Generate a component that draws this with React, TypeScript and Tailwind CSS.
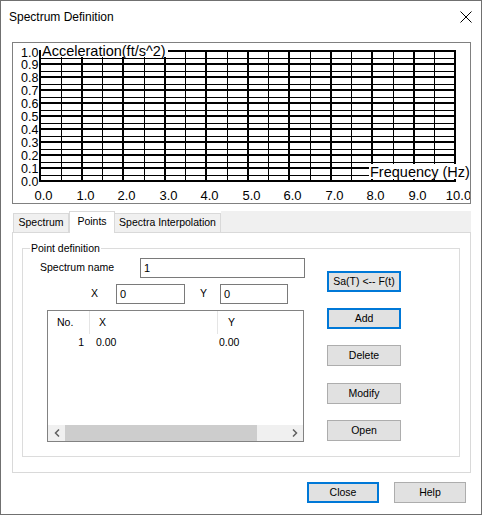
import React from "react";

const ui = { fontFamily: '"Liberation Sans", Arial, sans-serif' };

// plot geometry, in chart-svg coordinates (svg origin = page 13,43)
const X0 = 27;
const XSTEP = 41.5;
const Y0 = 8;
const YSTEP = 13;

function Chart() {
  const majorX = Array.from({ length: 11 }, (_, i) => Math.round(X0 + i * XSTEP));
  const minorX = Array.from({ length: 10 }, (_, i) => Math.round(X0 + (i + 0.5) * XSTEP) + 0.5);
  const majorY = Array.from({ length: 11 }, (_, j) => Math.round(Y0 + j * YSTEP));
  const minorY = Array.from({ length: 10 }, (_, j) => Math.round(Y0 + (j + 0.5) * YSTEP) + 0.5);
  const left = majorX[0];
  const right = majorX[10];
  const top = majorY[0];
  const bottom = majorY[10];

  return (
    <svg width={457} height={160} className="block" style={{ fontFamily: '"Liberation Sans", Arial, sans-serif' }}>
      {minorX.map((x) => (
        <line key={"mx" + x} x1={x} x2={x} y1={top} y2={bottom} stroke="#000" strokeWidth={1} />
      ))}
      {minorY.map((y) => (
        <line key={"my" + y} x1={left} x2={right} y1={y} y2={y} stroke="#000" strokeWidth={1} />
      ))}
      {majorX.map((x) => (
        <line key={"Mx" + x} x1={x} x2={x} y1={top - 1} y2={bottom + 1} stroke="#000" strokeWidth={2} />
      ))}
      {majorY.map((y) => (
        <line key={"My" + y} x1={left} x2={right} y1={y} y2={y} stroke="#000" strokeWidth={2} />
      ))}

      {/* axis titles sit on white boxes over the grid */}
      <rect x={28} y={1} width={127} height={13} fill="#fff" />
      <text x={29} y={12.5} fontSize={14.5} fill="#000">
        Acceleration(ft/s^2)
      </text>
      <rect x={356} y={121} width={100} height={15} fill="#fff" />
      <text x={357} y={134} fontSize={14.5} fill="#000">
        Frequency (Hz)
      </text>

      {["1.0", "0.9", "0.8", "0.7", "0.6", "0.5", "0.4", "0.3", "0.2", "0.1", "0.0"].map((t, j) => (
        <text
          key={t}
          x={25.5}
          y={majorY[j] + (j === 0 ? 6 : 5)}
          fontSize={12.5}
          textAnchor="end"
          fill="#000"
        >
          {t}
        </text>
      ))}
      {["0.0", "1.0", "2.0", "3.0", "4.0", "5.0", "6.0", "7.0", "8.0", "9.0", "10.0"].map((t, i) => (
        <text key={t} x={majorX[i] + 3.5} y={156.5} fontSize={13} textAnchor="middle" fill="#000">
          {t}
        </text>
      ))}
    </svg>
  );
}

function Button({ label, focused, className = "" }: { label: string; focused?: boolean; className?: string }) {
  return (
    <button
      className={`h-[21px] bg-[#e1e1e1] text-[10.5px] text-black leading-none flex items-center justify-center ${
        focused ? "border-2 border-[#0078d7]" : "border border-[#adadad]"
      } ${className}`}
      style={ui}
    >
      {label}
    </button>
  );
}

function TextBox({ value, className = "" }: { value: string; className?: string }) {
  return (
    <div className={`h-[20px] border border-[#7a7a7a] bg-white flex items-center pl-[3px] text-[11px] ${className}`}>
      {value}
    </div>
  );
}

function ListView() {
  return (
    <div className="ml-[24px] mt-[6px] w-[257px] h-[132px] border border-[#828282] bg-white flex flex-col text-[10.5px]">
      <div className="flex h-[24px] items-center">
        <div className="w-[41px] pl-[9px]">No.</div>
        <div className="w-[1px] h-[23px] self-start bg-[#e5e5e5]" />
        <div className="w-[127px] pl-[9px]">X</div>
        <div className="w-[1px] h-[23px] self-start bg-[#e5e5e5]" />
        <div className="flex-1 pl-[10px]">Y</div>
      </div>
      <div className="flex h-[16px] items-center">
        <div className="w-[36px] text-right">1</div>
        <div className="w-[129px] pl-[12px]">0.00</div>
        <div className="flex-1 pl-[6px]">0.00</div>
      </div>
      <div className="flex-1" />
      <div className="flex h-[16px] bg-[#f0f0f0]">
        <div className="w-[17px] flex items-center justify-center">
          <svg width="6" height="8" viewBox="0 0 6 8">
            <path d="M5 0.5 L1.5 4 L5 7.5" fill="none" stroke="#606060" strokeWidth="1.5" />
          </svg>
        </div>
        <div className="w-[192px] bg-[#cdcdcd]" />
        <div className="flex-1" />
        <div className="w-[17px] flex items-center justify-center">
          <svg width="6" height="8" viewBox="0 0 6 8">
            <path d="M1 0.5 L4.5 4 L1 7.5" fill="none" stroke="#606060" strokeWidth="1.5" />
          </svg>
        </div>
      </div>
    </div>
  );
}

export default function App() {
  return (
    <div className="w-[482px] h-[515px] border border-[#707070] bg-white flex flex-col text-black" style={ui}>
      {/* title bar */}
      <div className="h-[31px] flex items-center justify-between pl-[8px] pr-[9px]">
        <span className="text-[12px]">Spectrum Definition</span>
        <svg width="12" height="12" viewBox="0 0 12 12">
          <path d="M0.5 0.5 L11.5 11.5 M11.5 0.5 L0.5 11.5" stroke="#000" strokeWidth="1" />
        </svg>
      </div>

      {/* chart */}
      <div className="ml-[11px] mt-[10px] w-[459px] h-[162px] border border-[#808080] bg-white">
        <Chart />
      </div>

      {/* tabs */}
      <div className="ml-[11px] mt-[7px] w-[459px] flex flex-col">
        <div className="flex items-end h-[21px] text-[10.5px]">
          <div className="w-[1px]" />
          <div className="w-[56px] h-[19px] bg-[#f0f0f0] border border-b-0 border-[#d9d9d9] flex items-center justify-center">
            Spectrum
          </div>
          <div className="relative z-10 w-[46px] h-[22px] mb-[-1px] bg-white border border-b-0 border-[#d9d9d9] flex items-start pt-[2px] justify-center">
            Points
          </div>
          <div className="w-[106px] h-[19px] bg-[#f0f0f0] border border-b-0 border-l-0 border-[#d9d9d9] flex items-center justify-center">
            Spectra Interpolation
          </div>
          <div className="flex-1 h-[21px] bg-[#f0f0f0]" />
        </div>

        <div className="h-[241px] border border-[#d9d9d9] bg-white">
          {/* group box */}
          <div className="relative ml-[9px] mt-[15px] w-[438px] h-[209px] border border-[#dcdcdc] text-[10.5px]">
            <span className="absolute left-[7px] top-[-8px] bg-white px-[1px] leading-[14px]">Point definition</span>
            <div className="flex">
              <div className="w-[282px] flex flex-col">
                <div className="mt-[9px] flex items-center h-[20px]">
                  <span className="ml-[17px] w-[100px]">Spectrum name</span>
                  <TextBox value="1" className="w-[165px]" />
                </div>
                <div className="mt-[6px] flex items-center h-[20px]">
                  <span className="ml-[68px] w-[25px]">X</span>
                  <TextBox value="0" className="w-[69px]" />
                  <span className="ml-[15px] w-[20px]">Y</span>
                  <TextBox value="0" className="w-[68px]" />
                </div>
                <ListView />
              </div>
              <div className="ml-[22px] flex flex-col">
                <Button label="Sa(T) <-- F(t)" focused className="mt-[22px] w-[74px]" />
                <Button label="Add" focused className="mt-[16px] w-[74px]" />
                <Button label="Delete" className="mt-[16px] w-[74px]" />
                <Button label="Modify" className="mt-[17px] w-[74px]" />
                <Button label="Open" className="mt-[16px] w-[74px]" />
              </div>
            </div>
          </div>
        </div>
      </div>

      {/* dialog buttons */}
      <div className="mt-[9px] flex justify-end pr-[15px] gap-[15px]">
        <Button label="Close" focused className="w-[72px]" />
        <Button label="Help" className="w-[72px]" />
      </div>
    </div>
  );
}
